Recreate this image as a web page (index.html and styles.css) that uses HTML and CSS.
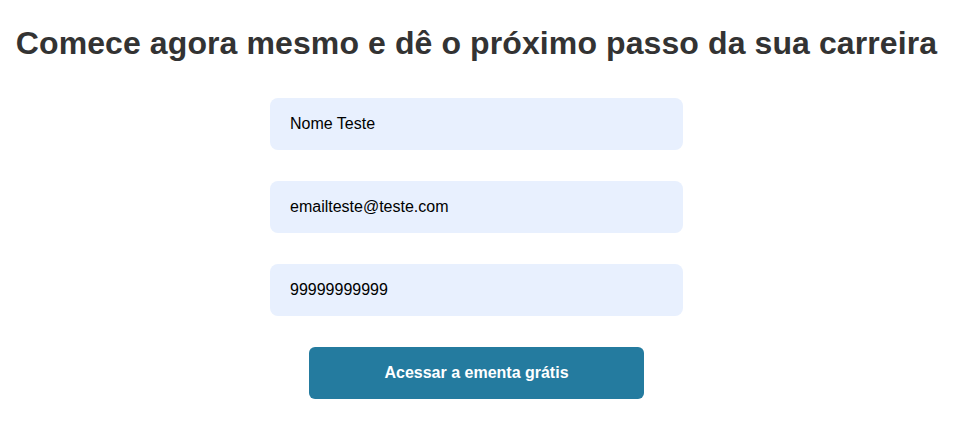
FILE: index.html
```html
<!DOCTYPE html>
<html lang="pt-BR">
<head>
<meta charset="utf-8">
<title>Cadastro</title>
<link rel="stylesheet" href="styles.css">
</head>
<body>
<main class="page">
  <h1 class="title">Comece agora mesmo e dê o próximo passo da sua carreira</h1>
  <form class="form">
    <input class="field" type="text" value="Nome Teste">
    <input class="field" type="email" value="emailteste@teste.com">
    <input class="field" type="tel" value="99999999999">
    <button class="submit" type="button">Acessar a ementa grátis</button>
  </form>
</main>
</body>
</html>
```
FILE: styles.css
```css
html, body {
  margin: 0;
  padding: 0;
  background: #ffffff;
}
body {
  font-family: "Liberation Sans", Arial, sans-serif;
}
.page {
  display: flex;
  flex-direction: column;
  align-items: center;
  padding-top: 25px;
  padding-right: 1px;
}
.title {
  margin: 0;
  font-size: 32px;
  font-weight: 700;
  color: #333333;
  text-align: center;
  line-height: 37px;
  letter-spacing: 0.1px;
  white-space: nowrap;
}
.form {
  margin-top: 36px;
  display: flex;
  flex-direction: column;
  align-items: center;
  gap: 31px;
}
.field {
  box-sizing: border-box;
  width: 413px;
  height: 52px;
  padding: 0 20px;
  border: none;
  border-radius: 8px;
  background: #e8f0fe;
  font-family: "Liberation Sans", Arial, sans-serif;
  font-size: 16px;
  color: #000000;
  outline: none;
}
.submit {
  box-sizing: border-box;
  width: 335px;
  height: 52px;
  border: none;
  border-radius: 6px;
  background: #247b9f;
  color: #ffffff;
  font-family: "Liberation Sans", Arial, sans-serif;
  font-size: 16px;
  font-weight: 700;
  cursor: pointer;
}
```
